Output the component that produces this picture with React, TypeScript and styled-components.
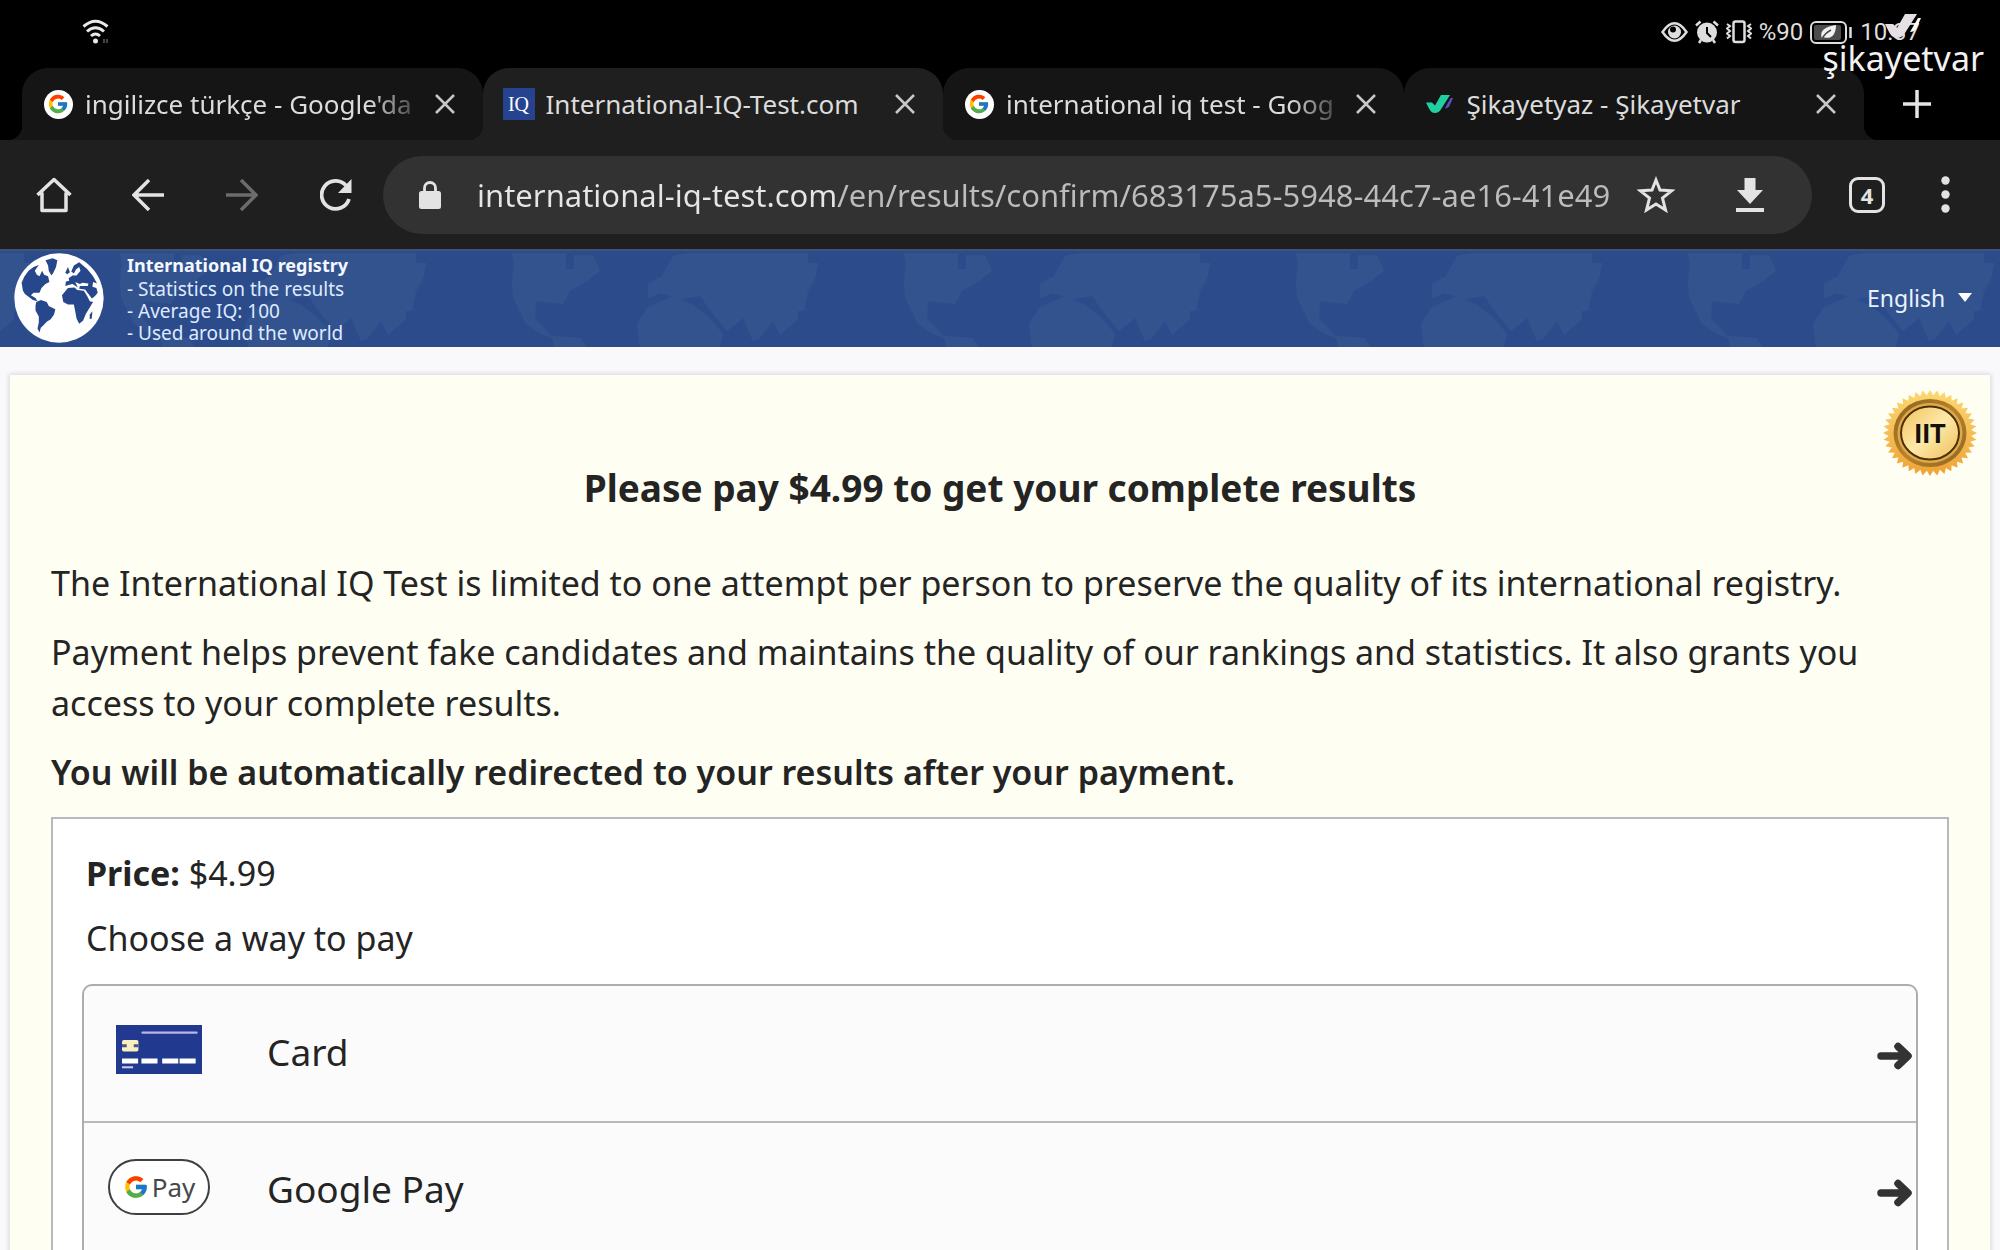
import React from "react";
import styled, { createGlobalStyle, css } from "styled-components";
import { FcGoogle } from "react-icons/fc";

const sans = `"Noto Sans", "Open Sans", sans-serif`;

const GlobalStyle = createGlobalStyle`
  *, *::before, *::after { box-sizing: border-box; }
  body { margin: 0; background: #000; font-family: ${sans}; }
  button, select, input { font: inherit; color: inherit; border: 0; background: none; padding: 0; margin: 0; }
  button, select { cursor: pointer; }
  svg { display: block; flex: none; }
`;

const Screen = styled.div`
  position: relative;
  display: flex;
  flex-direction: column;
  height: 100vh;
  overflow: hidden;
  background: #000;
`;

/* ---------- status bar ---------- */

const StatusBar = styled.header`
  display: flex;
  align-items: center;
  justify-content: space-between;
  flex: none;
  height: 68px;
  padding: 0 80px 4px 82px;
  color: #dedede;
`;

const StatusGroup = styled.div`
  display: flex;
  align-items: center;
  gap: 7px;
  font: 24px/32px Roboto, sans-serif;
`;

const Watermark = styled.div`
  position: absolute;
  top: 14px;
  right: 16px;
  display: flex;
  flex-direction: column;
  align-items: center;
  color: #f2f2f2;
  font-size: 34px;
  line-height: 40px;
`;

/* ---------- tab strip ---------- */

const TabStrip = styled.nav`
  display: flex;
  flex: none;
  height: 72px;
  padding: 0 30px 0 22px;
`;

const TabShell = styled.div<{ $active?: boolean }>`
  position: relative;
  display: flex;
  align-items: center;
  flex: 1;
  min-width: 0;
  padding: 0 28px 0 20px;
  border-radius: 26px 26px 0 0;
  color: #dcdcdc;
  background: ${(p) => (p.$active ? "#1f1f1f" : "#151515")};
  z-index: ${(p) => (p.$active ? 1 : 0)};

  &::before,
  &::after {
    content: "";
    position: absolute;
    bottom: 0;
    width: 14px;
    height: 14px;
  }
  &::before {
    left: -14px;
    background: radial-gradient(circle at 0 0, transparent 14px, ${(p) => (p.$active ? "#1f1f1f" : "#151515")} 14px);
  }
  &::after {
    right: -14px;
    background: radial-gradient(circle at 100% 0, transparent 14px, ${(p) => (p.$active ? "#1f1f1f" : "#151515")} 14px);
  }
`;

const TabButton = styled.button`
  display: flex;
  align-items: center;
  flex: 1;
  min-width: 0;
  gap: 11px;
  text-align: left;
`;

const Favicon = styled.span`
  display: grid;
  place-items: center;
  flex: none;
  width: 32px;
  height: 32px;
`;

const GoogleDisc = styled.span`
  display: grid;
  place-items: center;
  width: 29px;
  height: 29px;
  border-radius: 50%;
  background: #fff;
`;

const IqTile = styled.span`
  display: grid;
  place-items: center;
  width: 32px;
  height: 32px;
  background: #26438f;
  color: #fff;
  font: 20px/32px "Liberation Serif", serif;
`;

const TabTitle = styled.span<{ $fade?: boolean }>`
  flex: 1;
  min-width: 0;
  overflow: hidden;
  white-space: nowrap;
  font-size: 26px;
  line-height: 40px;
  ${(p) =>
    p.$fade &&
    css`
      mask-image: linear-gradient(90deg, #000 calc(100% - 50px), transparent calc(100% + 10px));
    `}
`;

const CloseButton = styled.button`
  margin-left: 16px;
  color: #c8c8c8;
`;

const NewTabButton = styled.button`
  display: grid;
  place-items: center;
  width: 106px;
  color: #e6e6e6;
`;

/* ---------- toolbar ---------- */

const Toolbar = styled.div`
  display: flex;
  align-items: center;
  flex: none;
  height: 109px;
  padding: 0 32px 0 7px;
  background: #1f1f1f;
  color: #e3e3e3;
`;

const ToolButton = styled.button<{ $width?: number }>`
  display: grid;
  place-items: center;
  flex: none;
  width: ${(p) => p.$width ?? 94}px;
  height: 78px;

  &:disabled {
    color: #6c6c6c;
  }
`;

const AddressBar = styled.label`
  display: flex;
  align-items: center;
  flex: 1;
  min-width: 0;
  height: 78px;
  padding: 0 15px 0 36px;
  border-radius: 39px;
  background: #323232;
`;

const Address = styled.input`
  flex: 1;
  min-width: 0;
  margin-left: 36px;
  outline: 0;
  font-size: 31px;
  line-height: 44px;
  background: linear-gradient(90deg, #e6e6e6 362px, #bcbcbc 362px);
  background-clip: text;
  -webkit-background-clip: text;
  -webkit-text-fill-color: transparent;
`;

const TabCount = styled.span`
  display: grid;
  place-items: center;
  width: 36px;
  height: 36px;
  border: 3px solid #e3e3e3;
  border-radius: 9px;
  font-size: 22px;
  font-weight: 700;
  line-height: 28px;
`;

/* ---------- site ---------- */

const Viewport = styled.div`
  flex: 1;
  min-height: 0;
  overflow: auto;
  scrollbar-width: none;
  background: #f9f9fb;
  color: #242424;
`;

const SiteHeader = styled.header`
  position: relative;
  display: flex;
  align-items: center;
  height: 98px;
  padding: 0 28px 3px 14px;
  border-top: 2px solid #3d557c;
  background: #2b4b8b;
  color: #fff;
`;

const MapBackdrop = styled.svg`
  position: absolute;
  inset: 0;
  width: 100%;
  height: 100%;
`;

const Registry = styled.div`
  position: relative;
  flex: 1;
  margin-left: 23px;
  color: #dfeaff;
  font-size: 19px;
  line-height: 22px;
`;

const RegistryTitle = styled.strong`
  display: block;
  color: #f4f8ff;
  font-size: 18px;
  line-height: 26px;
`;

const Globe = styled.svg`
  position: relative;
`;

const Language = styled.label`
  position: relative;
  display: flex;
  align-items: center;
  gap: 12px;
`;

const LanguageSelect = styled.select`
  appearance: none;
  outline: 0;
  color: #eaf2ff;
  font-size: 23px;
  line-height: 32px;
`;

const Card = styled.main`
  position: relative;
  margin: 28px 10px 0;
  padding: 87px 41px 60px;
  background: #fffef2;
  box-shadow: 0 0 5px 1px rgba(0, 0, 0, 0.14);
`;

const Seal = styled.svg`
  position: absolute;
  top: 15px;
  right: 13px;
`;

const Title = styled.h1`
  margin: 0 0 45px;
  text-align: center;
  font-size: 37px;
  font-weight: 700;
  line-height: 51px;
`;

const Paragraph = styled.p<{ $strong?: boolean }>`
  margin: 0 0 18px;
  font-size: 34px;
  font-weight: ${(p) => (p.$strong ? 600 : 400)};
  line-height: 51px;
`;

const PayBox = styled.section`
  margin-top: 19px;
  padding: 29px 29px 30px;
  border: 2px solid #b9b9bd;
  background: #fff;
`;

const PayLine = styled.p`
  margin: 0;
  padding: 0 4px 14px;
  font-size: 34px;
  line-height: 51px;
`;

const Methods = styled.div`
  display: flex;
  flex-direction: column;
  margin-top: 6px;
  border: 2px solid #adadb1;
  border-radius: 10px;
  background: #fbfbfc;
`;

const Method = styled.button`
  display: flex;
  align-items: center;
  height: 135px;
  padding: 0 3px 4px 24px;
  text-align: left;

  & + & {
    height: 137px;
    border-top: 2px solid #b9b9bd;
  }
`;

const MethodIcon = styled.span`
  display: grid;
  place-items: center;
  width: 102px;
  padding-bottom: 4px;
`;

const MethodName = styled.span`
  flex: 1;
  margin-left: 57px;
  font-size: 37px;
  line-height: 51px;
`;

const MethodArrow = styled.svg`
  margin-top: 8px;
`;

const GPayMark = styled.span`
  display: flex;
  align-items: center;
  justify-content: center;
  gap: 3px;
  width: 102px;
  height: 56px;
  border: 2px solid #3c4043;
  border-radius: 28px;
  background: #fff;
  color: #45484c;
  font-size: 26px;
  line-height: 36px;
`;

/* ---------- drawings ---------- */

const WifiIcon = () => (
  <svg width="28" height="26" viewBox="0 0 28 26" fill="none" stroke="#e8e8e8" strokeWidth="3">
    <path d="M1.500 7.500Q13.500-3 25.500 7.500M5 12.500Q13.500 5 22 12.500M9 17Q13.500 13 18 17" />
    <circle cx="13.500" cy="22" r="2.500" fill="#e8e8e8" stroke="none" />
    <path d="M22 20v4M25 20v4" stroke="#444" strokeWidth="2" />
  </svg>
);

const EyeIcon = () => (
  <svg width="27" height="22" viewBox="0 0 27 22" fill="none" stroke="currentColor" strokeWidth="2.500">
    <path d="M1.500 11Q13.500-6.500 25.500 11Q13.500 28.500 1.500 11Z" />
    <circle cx="13.500" cy="11" r="6.500" fill="currentColor" stroke="none" />
    <circle cx="12" cy="8.500" r="3" fill="#000" stroke="none" />
  </svg>
);

const AlarmIcon = () => (
  <svg width="24" height="24" viewBox="0 0 24 24" fill="none" stroke="currentColor" strokeWidth="2.500">
    <circle cx="12" cy="12.500" r="10" fill="currentColor" stroke="none" />
    <path d="M1 5.500L5.500 1.500M23 5.500L18.500 1.500M6 20l-2 3M18 20l2 3" />
    <path d="M12 7v6l4 4" stroke="#000" strokeWidth="2" />
  </svg>
);

const VibrateIcon = () => (
  <svg width="26" height="24" viewBox="0 0 26 24" fill="none" stroke="currentColor" strokeWidth="2.500">
    <rect x="7.500" y="1.500" width="11" height="20.500" rx="2" />
    <path d="M1 4l3 2-3 2.500 3 2.500-3 2.500 3 2.500-3 2.500M25 4l-3 2 3 2.500-3 2.500 3 2.500-3 2.500 3 2.500" strokeWidth="2" />
  </svg>
);

const BatteryIcon = () => (
  <svg width="43" height="25" viewBox="0 0 43 25" fill="none" stroke="#dedede" strokeWidth="2">
    <rect x="1" y="2" width="35" height="21" rx="5" />
    <rect x="4" y="5" width="27" height="15" rx="2" fill="#4c4c4c" stroke="none" />
    <path d="M12 19C9 10 15 7 26 5C26 15 21 20 13 17Z" fill="#f2f2f2" stroke="none" />
    <path d="M12 19Q15 13 21 10" stroke="#4c4c4c" strokeWidth="1.500" />
    <path d="M40.500 7v11" strokeWidth="2.500" />
  </svg>
);

const CheckMark = ({ width, body, tail }: { width: number; body: string; tail: string }) => (
  <svg width={width} viewBox="0 0 36 24">
    <path d="M0 10h8l4 4L20 0h12L20 19Q17 24 12 24Q7 24 4 18Z" fill={body} />
    <path d="M33 4h3L31 15Q29 18 25 18Z" fill={tail} />
  </svg>
);

const CloseIcon = () => (
  <svg width="20" height="20" viewBox="0 0 20 20" stroke="currentColor" strokeWidth="2.500">
    <path d="M1 1L19 19M19 1L1 19" />
  </svg>
);

const PlusIcon = () => (
  <svg width="28" height="28" viewBox="0 0 28 28" stroke="currentColor" strokeWidth="3.500">
    <path d="M14 0V28M0 14H28" />
  </svg>
);

const HomeIcon = () => (
  <svg width="36" height="36" viewBox="0 0 36 36" fill="none" stroke="currentColor" strokeWidth="3.500" strokeLinejoin="round">
    <path d="M1.500 18L18 2.500L34.500 18M6 15.500V33.500H30V15.500" />
  </svg>
);

const ArrowIcon = ({ flip }: { flip?: boolean }) => (
  <svg width="32" height="32" viewBox="0 0 32 32" fill="none" stroke="currentColor" strokeWidth="3.500">
    {flip ? <path d="M0 16H30M15 1L30 16L15 31" /> : <path d="M32 16H2M17 1L2 16L17 31" />}
  </svg>
);

const ReloadIcon = () => (
  <svg width="32" height="32" viewBox="0 0 32 32">
    <path d="M26 6.500A14 14 0 1 0 29 20" fill="none" stroke="currentColor" strokeWidth="3.800" />
    <path d="M31.500 0V14H18Z" fill="currentColor" />
  </svg>
);

const LockIcon = () => (
  <svg width="22" height="28" viewBox="0 0 22 28">
    <path d="M5.500 11V7a5.500 5.500 0 0 1 11 0v4" fill="none" stroke="#e3e3e3" strokeWidth="2.800" />
    <rect x="0" y="10" width="22" height="18" rx="2.500" fill="#e3e3e3" />
  </svg>
);

const StarIcon = () => (
  <svg width="38" height="38" viewBox="0 0 38 38" fill="none" stroke="currentColor" strokeWidth="3">
    <path d="M19 4L23 14L34.500 14.800L25.500 22L28.500 34L19 28L9.500 34L12.500 22L3.500 14.800L15 14Z" />
  </svg>
);

const DownloadIcon = () => (
  <svg width="28" height="34" viewBox="0 0 28 34" fill="currentColor">
    <path d="M8.500 0h11v12H27L14 26L1 12h7.500ZM0 30h28v4H0Z" />
  </svg>
);

const MenuIcon = () => (
  <svg width="9" height="37" viewBox="0 0 9 37" fill="currentColor">
    <circle cx="4.500" cy="4.500" r="4.200" />
    <circle cx="4.500" cy="18.500" r="4.200" />
    <circle cx="4.500" cy="32.500" r="4.200" />
  </svg>
);

const WorldBackdrop = () => (
  <MapBackdrop aria-hidden="true">
    <defs>
      <pattern id="world" x="98" y="0" width="392" height="98" patternUnits="userSpaceOnUse">
        <g fill="#33538f">
          <path d="M22 2H76V18H84V4H103L110 20L97 30L80 40L73 53L46 50L45 68L60 83L62 87L50 82L36 73L23 46L22 30L24 14Z" />
          <path d="M62 85L90 87L98 98H65Z" />
          <path d="M183 5L200 2H318V12H328L325 28L318 40L314 60H308V68L290 84L283 70L270 87L263 90L253 67L237 80L223 63L210 45L190 48L170 42L158 47V33L172 25Z" />
          <path d="M157 57L183 45L203 54L220 67L233 83L230 95L226 98H150L147 73Z" />
        </g>
      </pattern>
    </defs>
    <rect width="100%" height="100%" fill="url(#world)" />
  </MapBackdrop>
);

const GlobeLogo = () => (
  <Globe width="90" height="90" viewBox="42 38 270 272" aria-hidden="true">
    <circle cx="177" cy="174" r="135" fill="#fff" />
    <g fill="#27478c">
      <path d="M68 152L64 128L72 110L85 92L100 80L116 74L104 92L110 104L118 108L126 92L132 104L144 108L148 126L136 132L124 144L118 158L100 158L92 166L106 174L112 184L98 180L82 168L74 162Z" />
      <path d="M136 60L158 54L172 60L168 80L160 98L154 106L146 92L144 76Z" />
      <path d="M108 186L122 180L140 186L146 198L166 208L162 224L152 238L140 246L130 256L122 264L118 278L112 266L116 248L116 230L106 212L106 198Z" />
      <path d="M186 166L204 144L224 142L232 150L252 152L262 168L270 184L280 186L268 206L258 222L250 242L238 252L230 236L226 214L222 194L204 194L190 186Z" />
      <path d="M196 138L198 124L208 122L206 114L218 106L230 106L242 92L238 80L228 88L222 100L214 94L222 76L238 66L262 86L280 108L292 130L280 126L278 140L290 144L294 158L286 168L274 178L264 160L256 148L238 146L240 138L264 138L266 130L248 128L240 132L226 126L234 142L218 132L208 134Z" />
      <path d="M196 98L204 80L210 96L202 102Z" />
      <path d="M270 224L278 214L276 236L270 238Z" />
    </g>
    <path d="M262 160L276 178" stroke="#fff" strokeWidth="4" />
  </Globe>
);

const sealPoints = Array.from({ length: 80 }, (_, i) => {
  const a = (i * Math.PI) / 40;
  const k = i % 2 ? 0.88 : 1;
  return `${(47 + 47 * k * Math.cos(a)).toFixed(1)},${(43 + 43 * k * Math.sin(a)).toFixed(1)}`;
}).join(" ");

const SealBadge = () => (
  <Seal width="94" height="86" viewBox="0 0 94 86" role="img" aria-label="IIT">
    <defs>
      <linearGradient id="gold" x2="0" y2="1">
        <stop offset="0" stopColor="#fbd873" />
        <stop offset="1" stopColor="#efa234" />
      </linearGradient>
      <linearGradient id="ring" x2="1" y2="1">
        <stop offset="0" stopColor="#8a6220" />
        <stop offset="0.500" stopColor="#b9822c" />
        <stop offset="1" stopColor="#8a6526" />
      </linearGradient>
      <linearGradient id="face" x2="1" y2="1">
        <stop offset="0" stopColor="#f0c15c" />
        <stop offset="0.500" stopColor="#fde9a9" />
        <stop offset="1" stopColor="#efbd58" />
      </linearGradient>
    </defs>
    <polygon points={sealPoints} fill="url(#gold)" />
    <ellipse cx="47" cy="43" rx="36.500" ry="34" fill="url(#ring)" />
    <ellipse cx="47" cy="43" rx="32.500" ry="30" fill="#e0a948" />
    <ellipse cx="47" cy="43" rx="29" ry="26.500" fill="url(#face)" stroke="#4a2f08" strokeWidth="2" />
    <text x="47" y="53" textAnchor="middle" fontFamily="Lato, sans-serif" fontWeight="900" fontSize="26" fill="#15100a">
      IIT
    </text>
  </Seal>
);

const CardIcon = () => (
  <svg width="86" height="49" viewBox="0 0 257 146" preserveAspectRatio="none">
    <rect width="257" height="146" fill="#213a8f" />
    <rect x="76" y="19" width="168" height="7" rx="3" fill="#b9b4ea" />
    <rect x="18" y="45" width="49" height="34" rx="5" fill="#fbeec0" />
    <path d="M18 57h14v9H18ZM53 57h14v9H53Z" fill="#4a5688" />
    <path d="M18 100h48v15H18ZM76 100h48v15H76ZM138 100h48v15H138ZM190 100h48v15H190Z" fill="#fff" />
    <rect x="18" y="123" width="33" height="6" fill="#c9cdf0" />
  </svg>
);

const ProceedArrow = () => (
  <MethodArrow width="36" height="28" viewBox="0 0 36 28" aria-hidden="true">
    <path d="M4 14H30M21 4.500L31 14L21 23.500" fill="none" stroke="#333" strokeWidth="7.500" strokeLinecap="round" strokeLinejoin="round" />
  </MethodArrow>
);

/* ---------- page ---------- */

const google = (
  <GoogleDisc>
    <FcGoogle size={22} />
  </GoogleDisc>
);

const tabs = [
  { title: "ingilizce türkçe - Google'da", icon: google, fade: true },
  { title: "International-IQ-Test.com", icon: <IqTile>IQ</IqTile>, active: true },
  { title: "international iq test - Goog", icon: google, fade: true },
  { title: "Şikayetyaz - Şikayetvar", icon: <CheckMark width={27} body="#22cfa0" tail="#5b4fc9" /> },
];

const methods = [
  { name: "Card", icon: <CardIcon /> },
  {
    name: "Google Pay",
    icon: (
      <GPayMark>
        <FcGoogle size={26} />
        Pay
      </GPayMark>
    ),
  },
];

export default function App() {
  return (
    <Screen>
      <GlobalStyle />
      <StatusBar>
        <WifiIcon />
        <StatusGroup>
          <EyeIcon />
          <AlarmIcon />
          <VibrateIcon />
          <span>%90</span>
          <BatteryIcon />
          <time>10:37</time>
        </StatusGroup>
      </StatusBar>
      <TabStrip aria-label="Tabs">
        {tabs.map((tab) => (
          <TabShell key={tab.title} $active={tab.active}>
            <TabButton type="button">
              <Favicon>{tab.icon}</Favicon>
              <TabTitle $fade={tab.fade}>{tab.title}</TabTitle>
            </TabButton>
            <CloseButton type="button" aria-label="Close tab">
              <CloseIcon />
            </CloseButton>
          </TabShell>
        ))}
        <NewTabButton type="button" aria-label="New tab">
          <PlusIcon />
        </NewTabButton>
      </TabStrip>
      <Toolbar>
        <ToolButton type="button" aria-label="Home"><HomeIcon /></ToolButton>
        <ToolButton type="button" aria-label="Back"><ArrowIcon /></ToolButton>
        <ToolButton type="button" aria-label="Forward" disabled><ArrowIcon flip /></ToolButton>
        <ToolButton type="button" aria-label="Reload"><ReloadIcon /></ToolButton>
        <AddressBar>
          <LockIcon />
          <Address
            aria-label="Address"
            defaultValue="international-iq-test.com/en/results/confirm/683175a5-5948-44c7-ae16-41e49"
          />
          <ToolButton type="button" aria-label="Bookmark"><StarIcon /></ToolButton>
          <ToolButton type="button" aria-label="Download"><DownloadIcon /></ToolButton>
        </AddressBar>
        <ToolButton type="button" aria-label="Open tabs" $width={110}><TabCount>4</TabCount></ToolButton>
        <ToolButton type="button" aria-label="Menu" $width={46}><MenuIcon /></ToolButton>
      </Toolbar>

      <Viewport>
        <SiteHeader>
          <WorldBackdrop />
          <GlobeLogo />
          <Registry>
            <RegistryTitle>International IQ registry</RegistryTitle>
            <div>- Statistics on the results</div>
            <div>- Average IQ: 100</div>
            <div>- Used around the world</div>
          </Registry>
          <Language>
            <LanguageSelect aria-label="Language" defaultValue="en">
              <option value="en">English</option>
            </LanguageSelect>
            <svg width="14" height="9" viewBox="0 0 14 9" aria-hidden="true">
              <path d="M0 0H14L7 9Z" fill="#fff" />
            </svg>
          </Language>
        </SiteHeader>

        <Card>
          <SealBadge />
          <Title>Please pay $4.99 to get your complete results</Title>
          <Paragraph>
            The International IQ Test is limited to one attempt per person to preserve the quality of its
            international registry.
          </Paragraph>
          <Paragraph>
            Payment helps prevent fake candidates and maintains the quality of our rankings and statistics. It also
            grants you access to your complete results.
          </Paragraph>
          <Paragraph $strong>You will be automatically redirected to your results after your payment.</Paragraph>
          <PayBox>
            <PayLine>
              <strong>Price:</strong> $4.99
            </PayLine>
            <PayLine>Choose a way to pay</PayLine>
            <Methods>
              {methods.map((method) => (
                <Method key={method.name} type="button">
                  <MethodIcon>{method.icon}</MethodIcon>
                  <MethodName>{method.name}</MethodName>
                  <ProceedArrow />
                </Method>
              ))}
            </Methods>
          </PayBox>
        </Card>
      </Viewport>
      <Watermark>
        <CheckMark width={36} body="#e6e0e6" tail="#ffffff" />
        <span>şikayetvar</span>
      </Watermark>
    </Screen>
  );
}
